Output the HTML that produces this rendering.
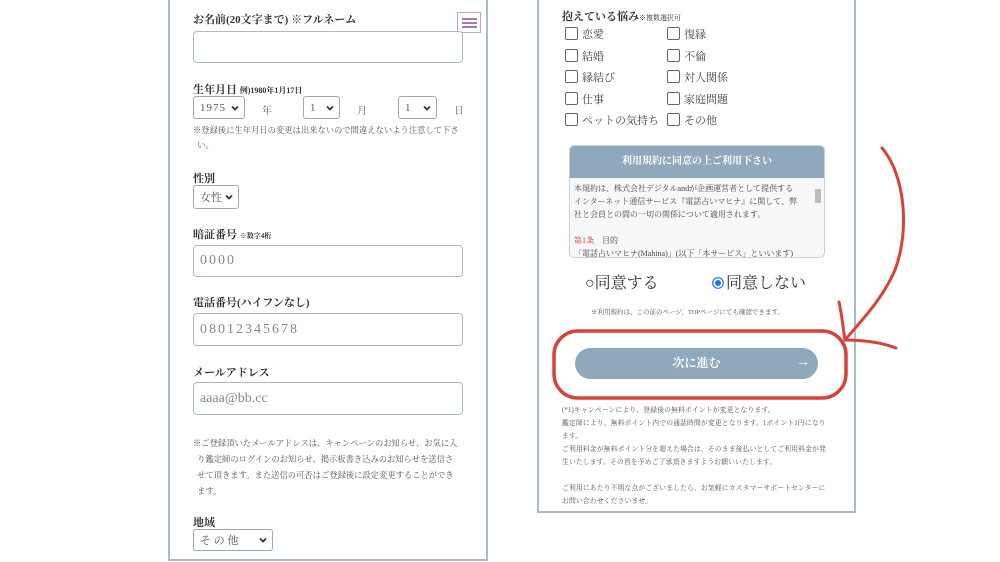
<!DOCTYPE html><html><head><meta charset="utf-8"><style>
*{margin:0;padding:0;box-sizing:border-box}
body{width:1000px;height:562px;background:#fff;position:relative;overflow:hidden;font-family:"Liberation Serif","Noto Serif CJK JP","Noto Serif CJK SC",serif;color:#333}
.a{position:absolute;white-space:nowrap}
.panel{position:absolute;border:2px solid #a9bccb;background:#fff}
.lbl{font-size:11px;font-weight:bold;color:#333}
.inp{position:absolute;border:1.5px solid #a9bccb;border-radius:4px;background:#fff;font-size:14px;color:#888;padding-left:6px;letter-spacing:2px;display:flex;align-items:center}
.sel{position:absolute;border:1.5px solid #9aaab8;border-radius:3px;font-size:11px;color:#555;padding-left:6px;display:flex;align-items:center;background:#fff}
.sel svg{position:absolute;right:5px;top:50%;margin-top:-3px}
.small{font-size:8.3px;color:#555;line-height:15px}
.cb{position:absolute;width:13px;height:13px;border:1.3px solid #666;border-radius:2px}
.ct{position:absolute;font-size:11px;color:#444}
</style></head><body>
<div class="panel" style="left:168px;top:-2px;width:320px;height:563px"></div>
<div class="panel" style="left:537px;top:-2px;width:319px;height:515px"></div>

<!-- left -->
<div class="a lbl" style="left:193px;top:11px">お名前(20文字まで) ※フルネーム</div>
<div class="a" style="left:457px;top:12px;width:24px;height:21px;border:1px solid #c9a4c9;background:#fff">
<div style="position:absolute;left:4px;top:5px;width:15px;height:1.5px;background:#a57aa5"></div>
<div style="position:absolute;left:4px;top:9px;width:15px;height:1.5px;background:#a57aa5"></div>
<div style="position:absolute;left:4px;top:13px;width:15px;height:1.5px;background:#a57aa5"></div></div>
<div class="inp" style="left:193px;top:31px;width:270px;height:32px"></div>
<div class="a lbl" style="left:193px;top:81px">生年月日 <span style="font-size:8px">例)1980年1月17日</span></div>
<div class="sel" style="left:193px;top:96px;width:52px;height:23px;letter-spacing:1px">1975<svg width="8" height="6" viewBox="0 0 8 6"><path d="M1 1.5L4 4.5L7 1.5" fill="none" stroke="#333" stroke-width="1.8"/></svg></div>
<div class="a" style="left:262px;top:102px;font-size:10px;color:#666">年</div>
<div class="sel" style="left:303px;top:96px;width:37px;height:23px">1<svg width="8" height="6" viewBox="0 0 8 6"><path d="M1 1.5L4 4.5L7 1.5" fill="none" stroke="#333" stroke-width="1.8"/></svg></div>
<div class="a" style="left:357px;top:102px;font-size:10px;color:#666">月</div>
<div class="sel" style="left:398px;top:96px;width:39px;height:23px">1<svg width="8" height="6" viewBox="0 0 8 6"><path d="M1 1.5L4 4.5L7 1.5" fill="none" stroke="#333" stroke-width="1.8"/></svg></div>
<div class="a" style="left:454px;top:102px;font-size:10px;color:#666">日</div>
<div class="a small" style="left:193px;top:123px;white-space:normal;width:280px">※登録後に生年月日の変更は出来ないので間違えないよう注意して下さ<br>&nbsp;&nbsp;い。</div>
<div class="a lbl" style="left:193px;top:170px">性別</div>
<div class="sel" style="left:193px;top:185px;width:46px;height:24px">女性<svg width="8" height="6" viewBox="0 0 8 6"><path d="M1 1.5L4 4.5L7 1.5" fill="none" stroke="#333" stroke-width="1.8"/></svg></div>
<div class="a lbl" style="left:193px;top:226px">暗証番号 <span style="font-size:7px">※数字4桁</span></div>
<div class="inp" style="left:193px;top:245px;width:270px;height:32px">0000</div>
<div class="a lbl" style="left:193px;top:294px">電話番号(ハイフンなし)</div>
<div class="inp" style="left:193px;top:313px;width:270px;height:33px">08012345678</div>
<div class="a lbl" style="left:193px;top:364px">メールアドレス</div>
<div class="inp" style="left:193px;top:382px;width:270px;height:33px;letter-spacing:0">aaaa@bb.cc</div>
<div class="a small" style="left:193px;top:436px;line-height:16px">※ご登録頂いたメールアドレスは、キャンペーンのお知らせ、お気に入<br>&nbsp;&nbsp;り鑑定師のログインのお知らせ、掲示板書き込みのお知らせを送信さ<br>&nbsp;&nbsp;せて頂きます。また送信の可否はご登録後に設定変更することができ<br>&nbsp;&nbsp;ます。</div>
<div class="a lbl" style="left:193px;top:514px">地域</div>
<div class="sel" style="left:193px;top:529px;width:80px;height:22px">そ の 他<svg width="8" height="6" viewBox="0 0 8 6"><path d="M1 1.5L4 4.5L7 1.5" fill="none" stroke="#333" stroke-width="1.8"/></svg></div>

<!-- right -->
<div class="a lbl" style="left:562px;top:8px">抱えている悩み<span style="font-size:7px;font-weight:normal">※複数選択可</span></div>
<div class="cb" style="left:565px;top:27px"></div><div class="ct" style="left:582px;top:26px">恋愛</div>
<div class="cb" style="left:667px;top:27px"></div><div class="ct" style="left:684px;top:26px">復縁</div>
<div class="cb" style="left:565px;top:49px"></div><div class="ct" style="left:582px;top:48px">結婚</div>
<div class="cb" style="left:667px;top:49px"></div><div class="ct" style="left:684px;top:48px">不倫</div>
<div class="cb" style="left:565px;top:70px"></div><div class="ct" style="left:582px;top:69px">縁結び</div>
<div class="cb" style="left:667px;top:70px"></div><div class="ct" style="left:684px;top:69px">対人関係</div>
<div class="cb" style="left:565px;top:92px"></div><div class="ct" style="left:582px;top:91px">仕事</div>
<div class="cb" style="left:667px;top:92px"></div><div class="ct" style="left:684px;top:91px">家庭問題</div>
<div class="cb" style="left:565px;top:113px"></div><div class="ct" style="left:582px;top:112px">ペットの気持ち</div>
<div class="cb" style="left:667px;top:113px"></div><div class="ct" style="left:684px;top:112px">その他</div>

<div class="a" style="left:569px;top:145px;width:256px;height:113px;border:1px solid #c8d2da;border-radius:5px;background:#f7f8f9;overflow:hidden">
<div style="height:32px;background:#8fa8bb;color:#fff;font-size:10px;font-weight:bold;text-align:center;line-height:32px">利用規約に同意の上ご利用下さい</div>
<div style="padding:4px 4px;font-size:8px;line-height:13px;color:#444">本規約は、株式会社デジタルandが企画運営者として提供する<br>インターネット通信サービス『電話占いマヒナ』に関して、弊<br>社と会員との間の一切の関係について適用されます。<br><br><span style="color:#d33">第1条</span>　目的<br>「電話占いマヒナ(Mahina)」(以下「本サービス」といいます)</div>
<div style="position:absolute;right:3px;top:43px;width:6px;height:14px;background:#bbb"></div>
</div>
<div class="a" style="left:585px;top:270px;font-size:16px;color:#333">○同意する</div>
<div class="a" style="left:712px;top:270px;font-size:16px;color:#333"><svg width="12" height="12" viewBox="0 0 12 12" style="vertical-align:-1px;margin-right:2px"><circle cx="6" cy="6" r="5.3" fill="#fff" stroke="#1a73e8" stroke-width="1.2"/><circle cx="6" cy="6" r="3" fill="#1a73e8"/></svg>同意しない</div>
<div class="a" style="left:591px;top:307px;font-size:6.5px;color:#555">※利用規約は、この前のページ、TOPページにても確認できます。</div>

<div class="a" style="left:575px;top:348px;width:243px;height:31px;border-radius:16px;background:#8fa8bb;color:#fff;font-size:12px;font-weight:bold;text-align:center;line-height:31px">次に進む<span style="position:absolute;right:8px;top:0;line-height:29px;font-weight:normal;font-size:14px">→</span></div>

<div class="a small" style="left:562px;top:404px;font-size:6.8px;line-height:13px;letter-spacing:0.15px">(*1)キャンペーンにより、登録後の無料ポイントが変更となります。<br>鑑定師により、無料ポイント内での通話時間が変更となります。1ポイント1円になり<br>ます。<br>ご利用料金が無料ポイント分を超えた場合は、そのまま後払いとしてご利用料金が発<br>生いたします。その旨を予めご了承頂きますようお願いいたします。<br><br>ご利用にあたり不明な点がございましたら、お気軽にカスタマーサポートセンターに<br>お問い合わせくださいませ。</div>

<svg class="a" style="left:0;top:0" width="1000" height="562" viewBox="0 0 1000 562">
<rect x="554" y="331" width="292" height="67" rx="24" fill="none" stroke="#d9423a" stroke-width="3.5"/>
<path d="M882 148 C905 175 910 230 895 270 C882 300 860 322 845 340" fill="none" stroke="#d9423a" stroke-width="3" stroke-linecap="round"/>
<path d="M839 302 C842 315 843 328 845 340 C862 340 880 342 896 348" fill="none" stroke="#d9423a" stroke-width="3" stroke-linecap="round"/>
</svg>
</body></html>
